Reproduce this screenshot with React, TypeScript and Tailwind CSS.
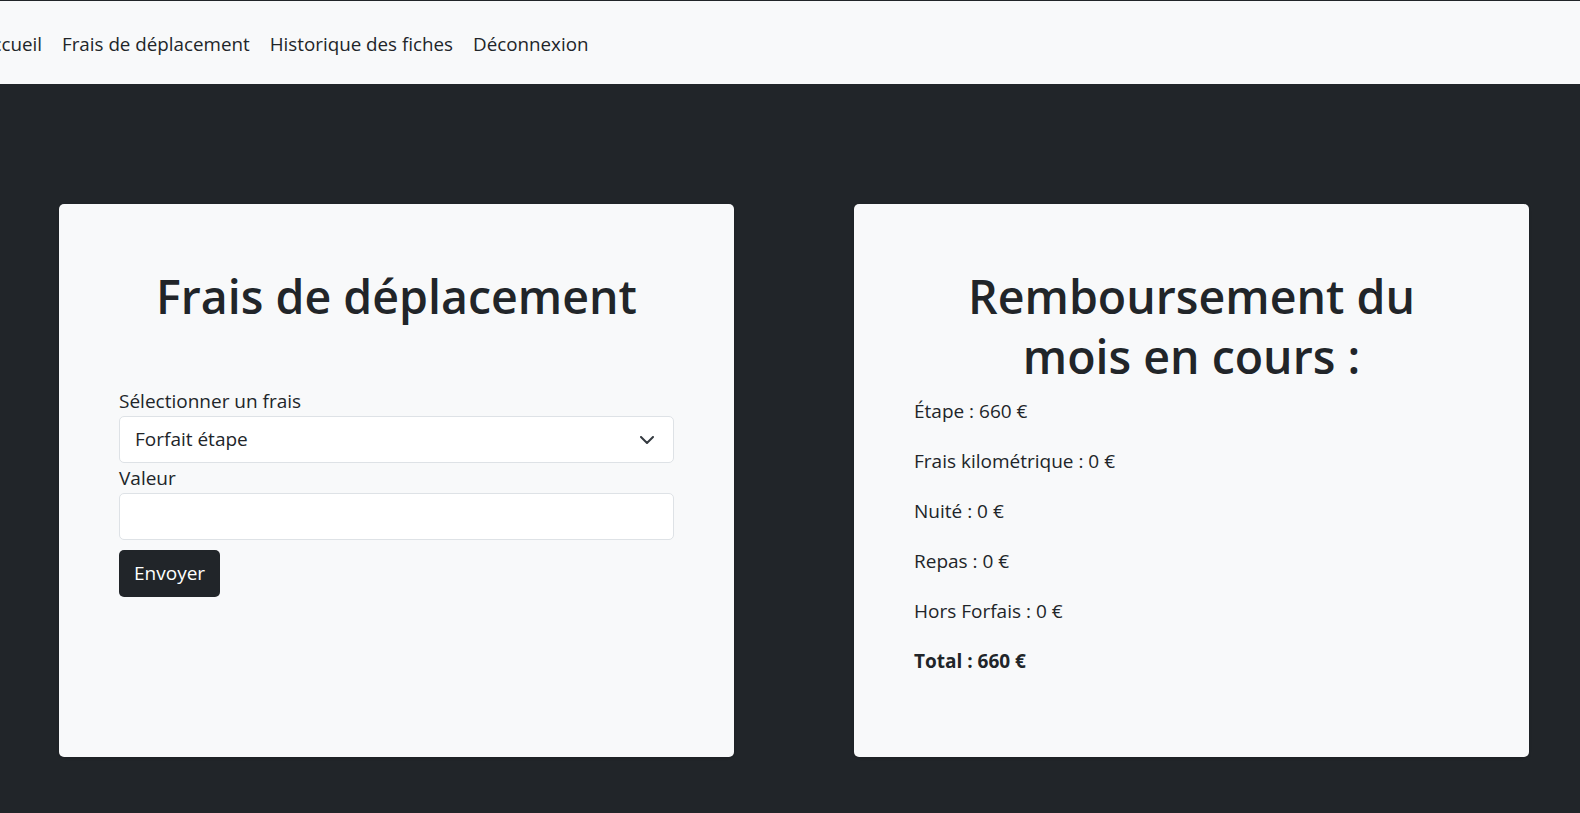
const links = ["Frais de déplacement", "Historique des fiches", "Déconnexion"];

const recap = [
  { label: "Étape", value: 660 },
  { label: "Frais kilométrique", value: 0 },
  { label: "Nuité", value: 0 },
  { label: "Repas", value: 0 },
  { label: "Hors Forfais", value: 0 },
];

const Navbar = () => {
  return (
    <nav className="flex h-[84px] items-center border-t border-[#212529] bg-[#f8f9fa] pt-[2px] text-[18.8px] leading-[30px] text-[#212529]">
      <div className="flex w-[52px] shrink-0 justify-end">
        <a className="whitespace-nowrap px-[10px]">Accueil</a>
      </div>
      {links.map((l) => (
        <a key={l} className="whitespace-nowrap px-[10px]">
          {l}
        </a>
      ))}
    </nav>
  );
};

const FormCard = () => {
  return (
    <div className="w-[675px] shrink-0 rounded-[5px] bg-[#f8f9fa] px-[60px] pt-[62px] shadow-sm">
      <h1 className="mb-[60px] text-center text-[46.5px] font-semibold leading-[60px]">
        Frais de déplacement
      </h1>
      <form>
        <label className="block leading-[30px]">Sélectionner un frais</label>
        <div className="flex h-[47px] items-center justify-between rounded-[5px] border border-[#dee2e6] bg-white pl-[15px] pr-[19px]">
          <span>Forfait étape</span>
          <svg width="14" height="8" viewBox="0 0 14 8" fill="none">
            <path
              d="M1 1l6 6 6-6"
              stroke="#343a40"
              strokeWidth="2"
              strokeLinecap="round"
              strokeLinejoin="round"
            />
          </svg>
        </div>
        <label className="block leading-[30px]">Valeur</label>
        <input className="block h-[47px] w-full rounded-[5px] border border-[#dee2e6] bg-white px-[15px] outline-none" />
        <button
          type="button"
          className="mt-[10px] h-[47px] rounded-[5px] bg-[#212529] px-[15px] text-white"
        >
          Envoyer
        </button>
      </form>
    </div>
  );
};

const RecapCard = () => {
  const total = recap.reduce((s, r) => s + r.value, 0);
  return (
    <div className="w-[675px] shrink-0 rounded-[5px] bg-[#f8f9fa] px-[60px] pb-[61px] pt-[62px] shadow-sm">
      <h1 className="mb-[10px] text-center text-[46.5px] font-semibold leading-[60px]">
        Remboursement du mois en cours :
      </h1>
      {recap.map((r) => (
        <p key={r.label} className="mb-[20px] leading-[30px]">
          {r.label} : {r.value} €
        </p>
      ))}
      <p className="mb-[20px] font-bold leading-[30px]">Total : {total} €</p>
    </div>
  );
};

export default function App() {
  return (
    <div className="min-h-screen bg-[#212529] font-['Open_Sans',sans-serif] text-[19px] text-[#212529]">
      <Navbar />
      <main className="flex gap-[120px] pl-[59px] pt-[120px]">
        <FormCard />
        <RecapCard />
      </main>
    </div>
  );
}
